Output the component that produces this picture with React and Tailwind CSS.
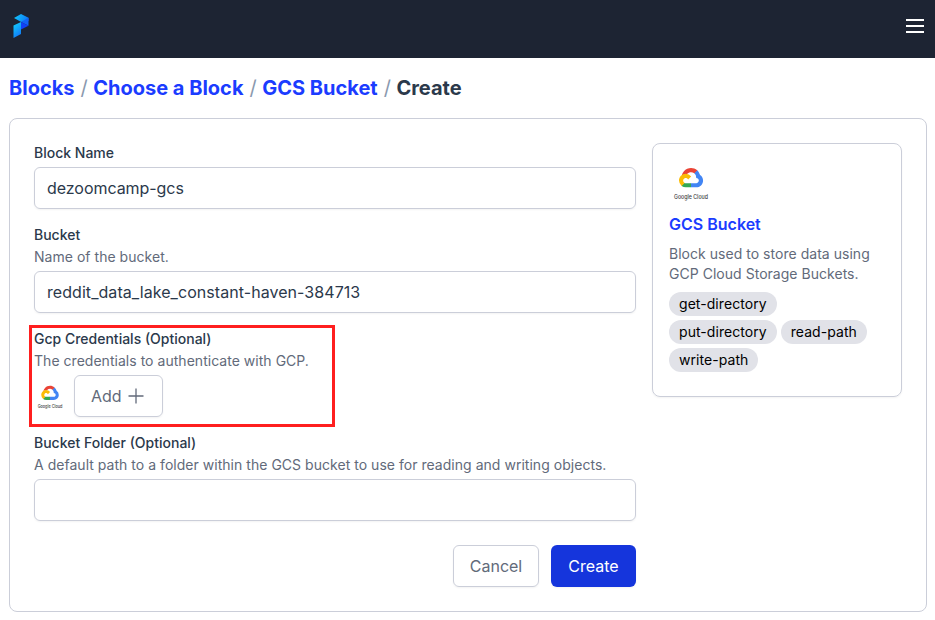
function PrefectLogo() {
  return (
    <svg className="block h-6 w-4" viewBox="0 0 16 24" fill="none">
      <defs>
        <linearGradient id="top" x1="1" y1="2" x2="15" y2="8" gradientUnits="userSpaceOnUse">
          <stop stopColor="#12c8fb" />
          <stop offset="1" stopColor="#0d72f5" />
        </linearGradient>
        <linearGradient id="stem" x1="0" y1="11" x2="8" y2="20" gradientUnits="userSpaceOnUse">
          <stop stopColor="#12c8fb" />
          <stop offset="1" stopColor="#117df8" />
        </linearGradient>
      </defs>
      <path d="M1 4 8 0l7.500 3.800V7L8.200 8z" fill="url(#top)" />
      <path d="M8 8l7.500-4.200v8z" fill="#1161f7" />
      <path d="M8 8l7.500 3.800L8 15.600z" fill="#1140f5" />
      <path d="M.5 11.500 8 8v12L.5 24z" fill="url(#stem)" />
    </svg>
  );
}

function GoogleCloudLogo({ className }) {
  return (
    <svg className={className} viewBox="0 0 44 44">
      <g transform="translate(10 8) scale(0.094)">
        <path fill="#EA4335" d="M170.252 56.819l22.253-22.253 1.483-9.37C153.437-11.677 88.976-7.496 52.42 33.92 42.267 45.423 34.734 59.764 30.717 74.573l7.97-1.123 44.505-7.34 3.436-3.513c19.797-21.742 53.27-24.667 76.128-6.168z" />
        <path fill="#4285F4" d="M224.205 73.918a100.249 100.249 0 0 0-30.217-48.722l-31.232 31.232a55.515 55.515 0 0 1 20.379 44.037v5.544c15.35 0 27.797 12.445 27.797 27.796 0 15.352-12.446 27.573-27.797 27.573h-55.671l-5.466 5.934v33.34l5.466 5.231h55.67c39.93.311 72.553-31.494 72.864-71.424a72.303 72.303 0 0 0-31.793-60.541" />
        <path fill="#34A853" d="M71.87 205.796h55.593V161.29H71.87a27.275 27.275 0 0 1-11.498-2.498l-7.887 2.42-22.409 22.253-1.952 7.574a71.991 71.991 0 0 0 43.746 14.757" />
        <path fill="#FBBC05" d="M71.87 61.425C31.94 61.664-.237 94.228.002 134.158a72.301 72.301 0 0 0 28.122 56.881l32.248-32.246c-13.99-6.322-20.208-22.786-13.887-36.776 6.32-13.99 22.786-20.208 36.775-13.888a27.796 27.796 0 0 1 13.887 13.888l32.248-32.248A72.224 72.224 0 0 0 71.87 61.425" />
      </g>
      <text x="5" y="38.500" textLength="34" lengthAdjust="spacingAndGlyphs" fontSize="6" fill="#3c3d41" className="font-['Inter',sans-serif] font-medium">Google Cloud</text>
    </svg>
  );
}

function Field({ label, description, children }) {
  return (
    <div className="flex flex-col gap-1">
      <div className="flex flex-col gap-0.5 text-sm">
        <div className="font-medium text-[#2b394b]">{label}</div>
        {description && <div className="tracking-[0.03px] text-[#626a7a]">{description}</div>}
      </div>
      {children}
    </div>
  );
}

function Input({ value, className = "" }) {
  return (
    <div className={`flex h-[42px] items-center rounded-md border border-[#cbced9] px-3 text-base text-[#2b394b] shadow-xs ${className}`}>
      {value}
    </div>
  );
}

function Tag({ children }) {
  return <span className="flex h-6 items-center rounded-full bg-[#e1e2e8] px-2.5 text-sm tracking-[0.06px] text-black">{children}</span>;
}

const crumbs = ["Blocks", "Choose a Block", "GCS Bucket"];

export default function App() {
  return (
    <div className="h-[620px] w-[935px] overflow-hidden bg-white font-['Inter',sans-serif]">
      <header className="flex h-[58px] items-start justify-between bg-[#1d2433] pt-3.5 pr-[11px] pl-[13px]">
        <PrefectLogo />
        <svg className="mt-[5px] block h-3.5 w-[18px]" viewBox="0 0 18 14" fill="#fff">
          <path d="M0 0h18v2H0zM0 6h18v2H0zM0 12h18v2H0z" />
        </svg>
      </header>

      <main className="pt-4 pr-2 pl-[9px]">
        <nav className="flex h-7 items-center text-xl font-bold whitespace-nowrap">
          {crumbs.map((crumb) => (
            <div key={crumb} className="flex">
              <a className="text-[#1b3cff]">{crumb}</a>
              <span className="mr-[5.5px] ml-1.5 font-normal text-[#8a99ae]">/</span>
            </div>
          ))}
          <span className="text-[#2b394b]">Create</span>
        </nav>

        <section className="mt-4 flex h-[494px] items-start gap-4 rounded-lg border border-[#cbced9] p-6">
          <div className="w-[602px]">
            <div className="flex flex-col gap-4">
              <Field label="Block Name">
                <Input value="dezoomcamp-gcs" className="tracking-[-0.05px]" />
              </Field>
              <Field label="Bucket" description="Name of the bucket.">
                <Input value="reddit_data_lake_constant-haven-384713" className="tracking-[0.06px]" />
              </Field>
              <div className="relative">
                <Field label="Gcp Credentials (Optional)" description="The credentials to authenticate with GCP.">
                  <div className="flex items-center gap-2">
                    <GoogleCloudLogo className="size-8" />
                    <div className="flex h-[42px] w-[89px] items-center rounded-md border border-[#cbced9] pl-4 text-base text-[#626a7a] shadow-xs">
                      Add
                      <svg className="ml-1.5 block size-4" viewBox="0 0 16 16" stroke="#626a7a" strokeWidth="1.3">
                        <path d="M8 .5v15M.5 8h15" />
                      </svg>
                    </div>
                  </div>
                </Field>
                <div className="pointer-events-none absolute -top-1 -left-[5px] h-[102px] w-[306px] border-3 border-[#ff1f1f]" />
              </div>
              <Field
                label="Bucket Folder (Optional)"
                description="A default path to a folder within the GCS bucket to use for reading and writing objects."
              >
                <Input value="" />
              </Field>
            </div>
            <div className="mt-6 flex justify-end gap-3 text-base">
              <button className="h-[42px] w-[86px] rounded-md border border-[#cbced9] text-[#626a7a] shadow-xs">Cancel</button>
              <button className="h-[42px] w-[85px] rounded-md bg-[#1535dc] text-white shadow-xs">Create</button>
            </div>
          </div>

          <aside className="flex h-[254px] w-[250px] flex-col rounded-lg border border-[#cbced9] p-4 shadow-xs">
            <GoogleCloudLogo className="size-11" />
            <div className="mt-2 text-base font-semibold text-[#1b3cff]">GCS Bucket</div>
            <p className="mt-2 text-sm tracking-[0.03px] text-[#626a7a]">Block used to store data using GCP Cloud Storage Buckets.</p>
            <div className="mt-2 flex flex-wrap gap-1">
              <Tag>get-directory</Tag>
              <Tag>put-directory</Tag>
              <Tag>read-path</Tag>
              <Tag>write-path</Tag>
            </div>
          </aside>
        </section>
      </main>
    </div>
  );
}
